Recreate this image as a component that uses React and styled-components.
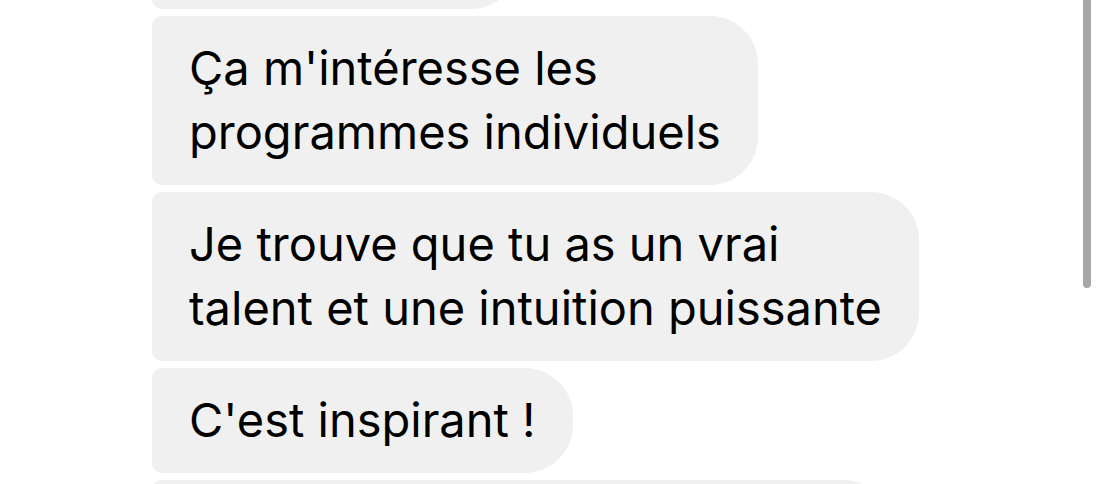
import React from "react";
import styled, { createGlobalStyle } from "styled-components";

const GlobalStyle = createGlobalStyle`
  html, body {
    margin: 0;
    padding: 0;
    background: #ffffff;
    overflow: hidden;
  }
`;

const Screen = styled.div`
  position: relative;
  width: 1100px;
  height: 484px;
  overflow: hidden;
  background: #ffffff;
  font-family: Inter, "Noto Sans", sans-serif;
`;

const Thread = styled.div`
  display: flex;
  flex-direction: column;
  align-items: flex-start;
  gap: 7px;
  margin-top: ${(p) => p.offset}px;
  padding-left: 152px;
`;

const Bubble = styled.div`
  background: #f0f0f0;
  color: #000000;
  font-size: 47px;
  line-height: 64px;
  padding: 20px 37px 21px 37px;
  border-radius: 10px 48px 48px 10px;
  white-space: pre-line;
`;

const ScrollThumb = styled.div`
  position: absolute;
  top: -40px;
  left: 1083px;
  width: 8px;
  height: 328px;
  border-radius: 4px;
  background: #a7a7a7;
`;

const messages = [
  "Merci encore",
  "Ça m'intéresse les\nprogrammes individuels",
  "Je trouve que tu as un vrai\ntalent et une intuition puissante",
  "C'est inspirant !",
  "Tu fais des séances en ligne ?",
];

export default function App() {
  return (
    <Screen>
      <GlobalStyle />
      <Thread offset={-96}>
        {messages.map((m, i) => (
          <Bubble key={i}>{m}</Bubble>
        ))}
      </Thread>
      <ScrollThumb />
    </Screen>
  );
}
